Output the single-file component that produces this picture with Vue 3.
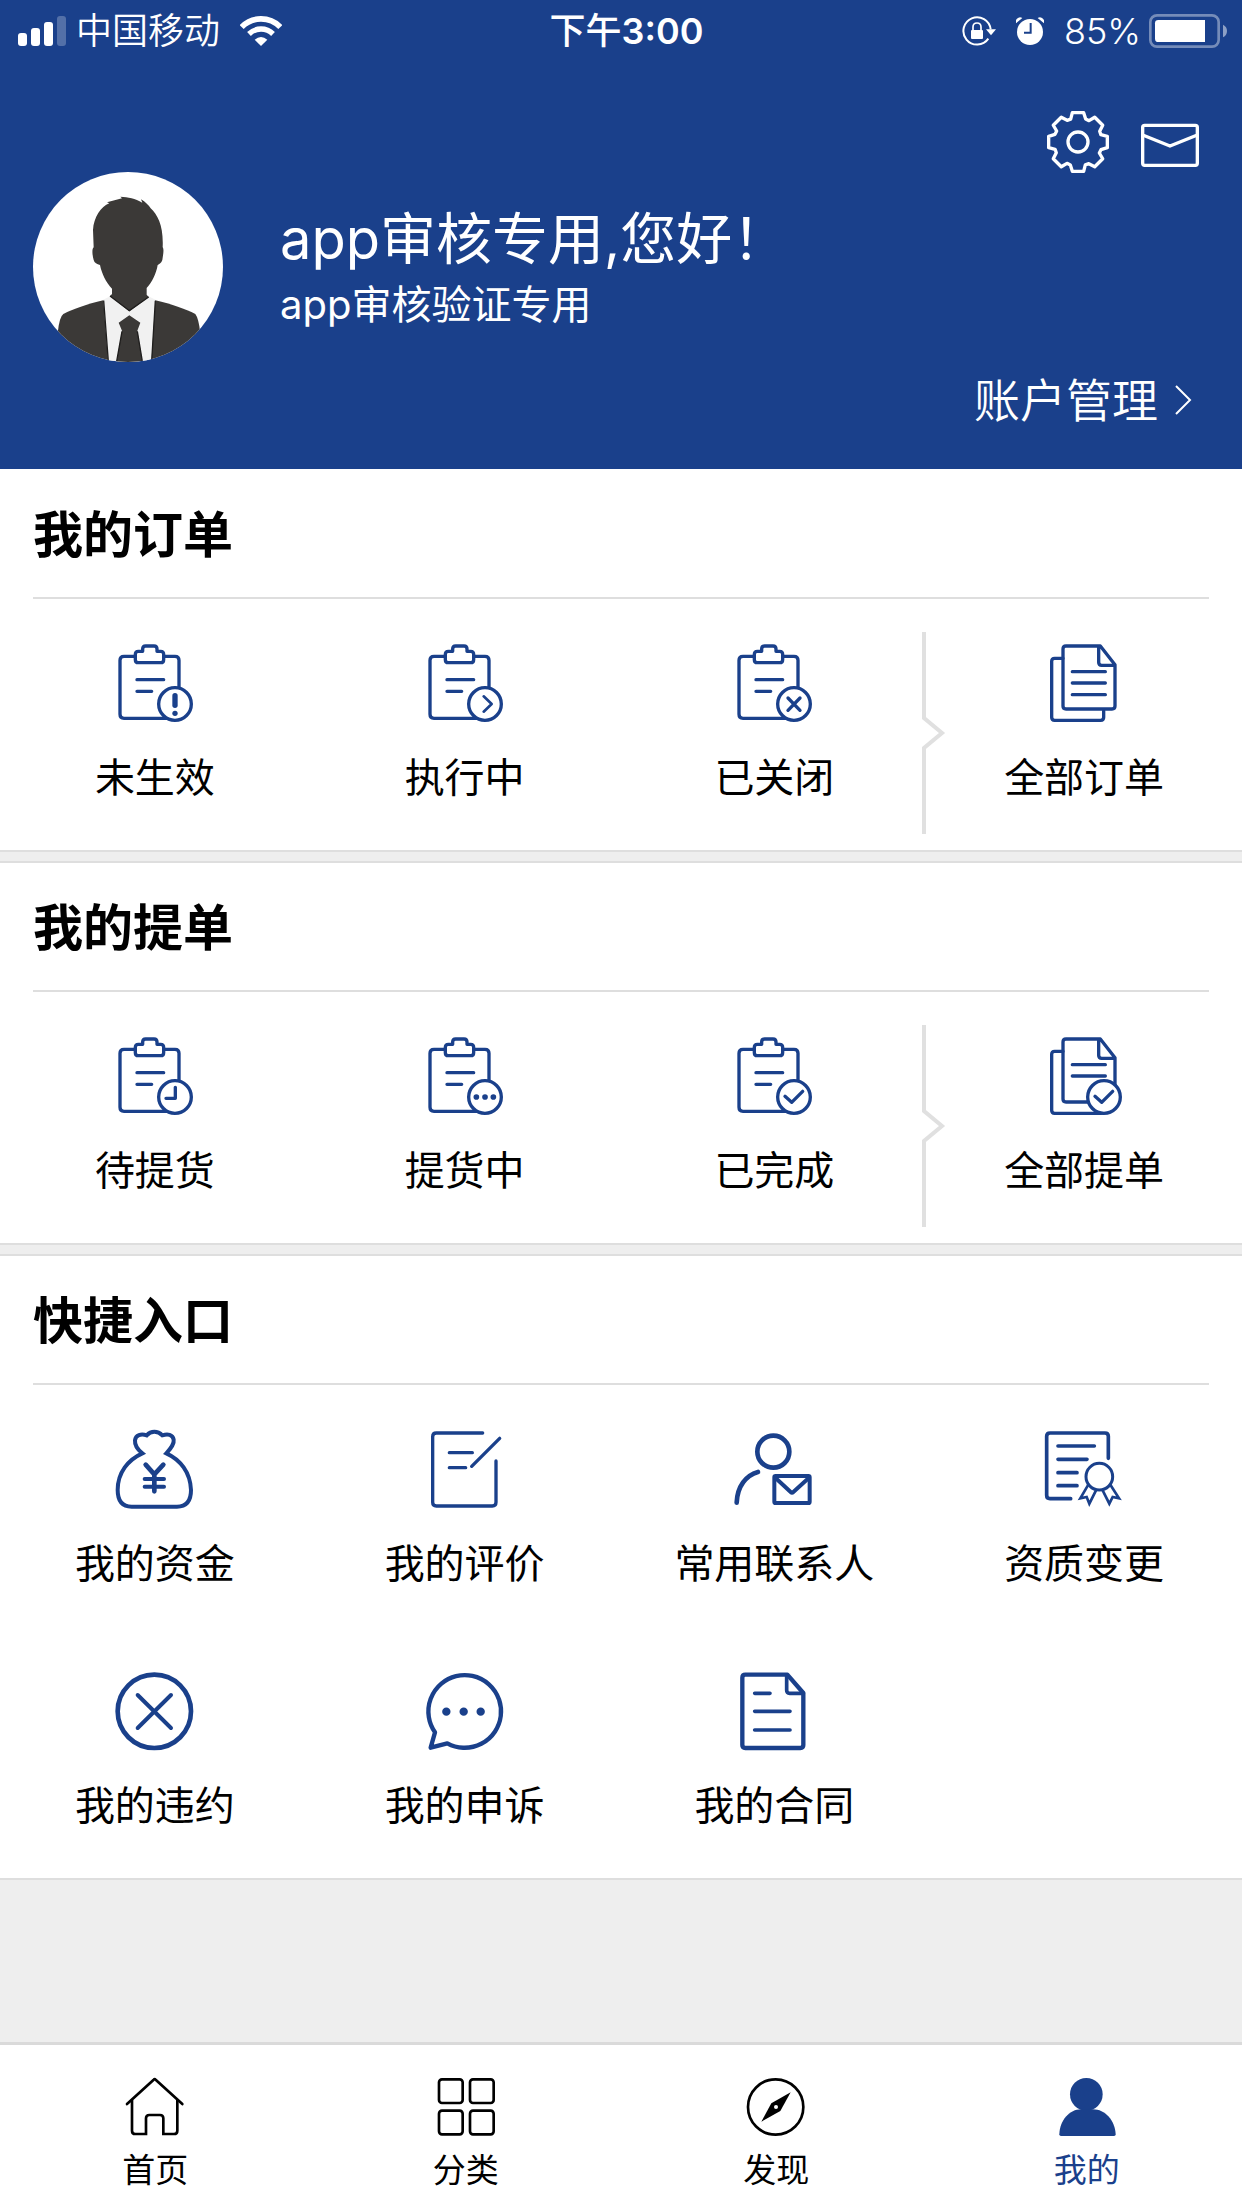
<script setup>
const toothCorners = [[-17, -88], [17, -88], [23, -69], [33, -64]]
const gearPoints = Array.from({ length: 8 }, (_, i) => {
  const a = (i * Math.PI) / 4
  return toothCorners
    .map(([x, y]) => [
      (x * Math.cos(a) - y * Math.sin(a)).toFixed(1),
      (x * Math.sin(a) + y * Math.cos(a)).toFixed(1)
    ].join(','))
    .join(' ')
}).join(' ')

const sections = [
  {
    title: '我的订单',
    split: true,
    items: [
      { label: '未生效', icons: ['clipboard', 'badge-alert'] },
      { label: '执行中', icons: ['clipboard', 'badge-next'] },
      { label: '已关闭', icons: ['clipboard', 'badge-close'] },
      { label: '全部订单', icons: ['pages', 'page-line'] }
    ]
  },
  {
    title: '我的提单',
    split: true,
    items: [
      { label: '待提货', icons: ['clipboard', 'badge-clock'] },
      { label: '提货中', icons: ['clipboard', 'badge-dots'] },
      { label: '已完成', icons: ['clipboard', 'badge-check'] },
      { label: '全部提单', icons: ['pages', 'badge-check'] }
    ]
  },
  {
    title: '快捷入口',
    split: false,
    items: [
      { label: '我的资金', icons: ['money'] },
      { label: '我的评价', icons: ['review'] },
      { label: '常用联系人', icons: ['contact'] },
      { label: '资质变更', icons: ['certificate'] },
      { label: '我的违约', icons: ['breach'] },
      { label: '我的申诉', icons: ['appeal'] },
      { label: '我的合同', icons: ['contract'] }
    ]
  }
]

const tabs = [
  { label: '首页', icon: 'tab-home', active: false },
  { label: '分类', icon: 'tab-grid', active: false },
  { label: '发现', icon: 'tab-compass', active: false },
  { label: '我的', icon: 'tab-me', active: true }
]
</script>

<template>
  <div class="page">
    <svg class="sprite" aria-hidden="true">
      <symbol id="clipboard" viewBox="0 0 240 240">
        <path d="M61 40H27q-12 0-12 12V214q0 12 12 12H160M146 40H180q12 0 12 12V140" />
        <path d="M61 50V34q0-9 9-9H83V18q0-9 9-9H117q9 0 9 9v7h11q9 0 9 9v16q0 9-9 9H70q-9 0-9-9z" />
        <path d="M66 110H146M66 145H110" />
      </symbol>
      <symbol id="badge-alert" viewBox="0 0 240 240">
        <circle cx="180" cy="183" r="49" fill="#fff" />
        <path d="M180 158V187" stroke-width="16" />
        <circle cx="180" cy="211" r="8" fill="currentColor" stroke="none" />
      </symbol>
      <symbol id="badge-next" viewBox="0 0 240 240">
        <circle cx="180" cy="183" r="49" fill="#fff" />
        <path d="M176 160L200 183L176 206" stroke-width="8" />
      </symbol>
      <symbol id="badge-close" viewBox="0 0 240 240">
        <circle cx="180" cy="183" r="49" fill="#fff" />
        <path d="M162 165L198 202M198 165L162 202" />
      </symbol>
      <symbol id="badge-clock" viewBox="0 0 240 240">
        <circle cx="180" cy="183" r="49" fill="#fff" />
        <path d="M181 154V187H153" />
      </symbol>
      <symbol id="badge-dots" viewBox="0 0 240 240">
        <circle cx="180" cy="183" r="49" fill="#fff" />
        <path d="M154 183h.1M180 183h.1M205 183h.1" stroke-width="17" />
      </symbol>
      <symbol id="badge-check" viewBox="0 0 240 240">
        <circle cx="180" cy="183" r="49" fill="#fff" />
        <path d="M153 181L173 199L206 166" />
      </symbol>
      <symbol id="pages" viewBox="0 0 240 240">
        <path d="M57 46H32q-9 0-9 9V223q0 9 9 9H170q9 0 9-9V203" />
        <path d="M169 9H66q-9 0-9 9V189q0 9 9 9H204q9 0 9-9V65L169 9zM164 12V58q0 9 9 9H211" />
        <path d="M85 86H184M85 120H184" />
      </symbol>
      <symbol id="page-line" viewBox="0 0 240 240">
        <path d="M85 155H184" />
      </symbol>
      <symbol id="money" viewBox="0 0 240 240">
        <path d="M82 73C40 92 8 130 8 183C8 218 24 233 50 233H186C212 233 228 218 228 183C226 130 196 92 154 73C170 55 178 44 176 32C173 16 158 14 142 19C128 5 108 5 95 19C78 13 62 18 60 34C59 46 66 60 82 73Z" stroke-linejoin="miter" stroke-width="12" />
        <path d="M92 107L118 136L145 107M118 136V187" stroke-width="14" />
        <path d="M89 150H147M89 173H147" stroke-width="12" />
      </symbol>
      <symbol id="review" viewBox="0 0 240 240">
        <path d="M173 12H34q-11 0-11 11V220q0 11 11 11H202q11 0 11-11V96" />
        <path d="M224 28L140 112M73 71H142M73 116H122" />
      </symbol>
      <symbol id="contact" viewBox="0 0 240 240">
        <circle cx="118" cy="68" r="48" stroke-width="14" />
        <path d="M8 221C10 172 36 139 72 129" stroke-width="14" />
        <rect x="121" y="141" width="106" height="81" rx="4" stroke-width="12" />
        <path d="M124 146L170 189q4 4 8 0L225 146" stroke-width="12" />
      </symbol>
      <symbol id="certificate" viewBox="0 0 240 240">
        <path d="M193 88V22q0-10-10-10H18q-10 0-10 10V199q0 10 10 10H80" stroke-width="11" />
        <path d="M42 51H151M42 91H129M42 131H99M42 170H99" stroke-width="11" />
        <circle cx="166" cy="143" r="40" stroke-width="9" />
        <path d="M133 167L109 208L128 204L136 224L156 184M199 167L225 208L206 204L196 224L176 184" stroke-width="8" stroke-linejoin="miter" />
      </symbol>
      <symbol id="breach" viewBox="0 0 240 240">
        <circle cx="118" cy="121" r="110" stroke-width="14" />
        <path d="M68 72L168 171M168 72L68 171" stroke-width="12" />
      </symbol>
      <symbol id="appeal" viewBox="0 0 240 240">
        <path d="M30 184A109 109 0 1 1 67 217L17 230Z" stroke-width="13" />
        <path d="M64 122h.1M116 122h.1M167 122h.1" stroke-width="25" />
      </symbol>
      <symbol id="contract" viewBox="0 0 240 240">
        <path d="M160 11H34q-9 0-9 9V222q0 9 9 9H199q9 0 9-9V66L160 11z" stroke-width="13" />
        <path d="M158 14V58q0 9 9 9H208M62 67H108M62 121H168M62 177H168" stroke-width="11" />
      </symbol>
      <symbol id="tab-home" viewBox="0 0 180 180">
        <path d="M6 81L86 8q3-3 6 0L172 81" />
        <path d="M21 69V161q0 10 10 10H63V124q0-10 10-10H105q10 0 10 10V171H147q10 0 10-10V69" stroke-linecap="butt" stroke-linejoin="miter" />
      </symbol>
      <symbol id="tab-grid" viewBox="0 0 180 180">
        <rect x="9" y="7" width="71" height="71" rx="9" />
        <rect x="102" y="7" width="71" height="71" rx="9" />
        <rect x="9" y="101" width="71" height="71" rx="9" />
        <rect x="102" y="101" width="71" height="71" rx="9" />
      </symbol>
      <symbol id="tab-compass" viewBox="0 0 180 180">
        <circle cx="89" cy="90" r="83" />
        <path d="M134 46L103 102L46 134L76 79Z" fill="currentColor" stroke="none" />
        <circle cx="90" cy="90" r="6" fill="#fff" stroke="none" />
      </symbol>
      <symbol id="tab-me" viewBox="0 0 180 180">
        <g fill="currentColor" stroke="none">
          <circle cx="88" cy="52" r="49" />
          <path d="M7 172C8 130 38 97 72 97H108C144 97 174 130 176 172q0 5-5 5H12q-5 0-5-5z" />
        </g>
      </symbol>
    </svg>

    <header class="hero">
      <div class="status">
        <div class="status-side">
          <svg class="signal" viewBox="0 0 48 30" fill="#fff">
            <rect y="17" width="9" height="13" rx="3" />
            <rect x="13" y="12" width="9" height="18" rx="3" />
            <rect x="26" y="6" width="9" height="24" rx="3" />
            <rect x="39" width="9" height="30" rx="3" opacity=".25" />
          </svg>
          <span class="carrier">中国移动</span>
          <svg class="wifi" viewBox="0 0 126 90" fill="none" stroke="#fff">
            <path d="M5 33A81 81 0 0 1 121 33" stroke-width="17" />
            <path d="M27 54A51 51 0 0 1 99 54" stroke-width="16" />
            <path d="M63 90L44 71Q63 55 82 71Z" fill="#fff" stroke="none" />
          </svg>
        </div>
        <time class="clock">下午<span class="digits">3:00</span></time>
        <div class="status-side status-right">
          <svg class="lock" viewBox="0 0 102 90" fill="none" stroke="#fff">
            <path d="M79 68A41 41 0 1 1 86 40" stroke-width="6" />
            <path d="M72 40H102L87 58Z" fill="#fff" stroke="none" />
            <rect x="27" y="42" width="36" height="27" rx="3" fill="#fff" stroke="none" />
            <path d="M33 44V33q0-12 12-12t12 12V44" stroke-width="5" />
          </svg>
          <svg class="alarm" viewBox="0 0 84 84">
            <circle cx="42" cy="45" r="39" fill="#fff" />
            <path d="M44 18V47H24" fill="none" stroke="#1a408b" stroke-width="6" />
            <path d="M0 19V9Q8-3 19 3ZM84 19V9Q76-3 65 3Z" fill="#fff" />
          </svg>
          <span class="percent">85%</span>
          <svg class="battery" viewBox="0 0 234 102">
            <rect x="4" y="4" width="205" height="94" rx="20" fill="none" stroke="#fff" stroke-width="8" opacity=".4" />
            <path d="M168 18V84H28q-10 0-10-10V28q0-10 10-10z" fill="#fff" />
            <path d="M222 32q12 6 12 19t-12 19z" fill="#fff" opacity=".5" />
          </svg>
        </div>
      </div>

      <div class="actions">
        <button type="button" class="action" aria-label="设置">
          <svg class="gear" viewBox="-93 -93 186 186">
            <polygon :points="gearPoints" />
            <circle r="30" />
          </svg>
        </button>
        <button type="button" class="action" aria-label="消息">
          <svg class="mail" viewBox="0 0 180 186">
            <rect x="8" y="43" width="164" height="120" rx="6" />
            <path d="M8 72L90 105L172 72" />
          </svg>
        </button>
      </div>

      <div class="profile">
        <svg class="avatar" viewBox="39 36 570 570">
          <defs>
            <clipPath id="avatar-clip"><circle cx="324" cy="321" r="285" /></clipPath>
          </defs>
          <g clip-path="url(#avatar-clip)">
            <rect x="39" y="36" width="570" height="570" fill="#fff" />
            <path d="M248 420L272 408H384L408 420L396 610H262Z" fill="#f1f1f1" />
            <g fill="#3b3937">
              <path d="M219 210C221 172 243 140 268 130L261 127L306 115L301 110C325 112 345 114 367 128L363 118C376 126 387 136 392 145C414 165 431 200 428 262C433 268 429 285 427 300C424 309 418 312 413 315C409 340 396 368 380 384V404L386 411L328 454L270 408L276 402V386C258 368 245 340 240 315C231 312 223 309 221 300C217 285 215 268 221 262Z" />
              <path d="M250 421C200 433 160 447 130 462Q118 470 113 520V610H265Z" />
              <path d="M406 421C456 433 496 447 526 462Q536 475 541 520V610H394Z" />
              <path d="M328 466L361 488L352 512L368 610H289L306 512L296 488Z" />
            </g>
            <path d="M270 408L328 452L386 411M251 422L265 604M406 422L395 604M306 514L290 604M352 514L367 604" fill="none" stroke="#1f1e1d" stroke-width="4" />
          </g>
        </svg>
        <div class="names">
          <h1 class="name">app审核专用,您好&#xFF01;</h1>
          <p class="company">app审核验证专用</p>
        </div>
      </div>

      <a class="account" href="#">
        账户管理
        <svg class="chevron" viewBox="0 0 18 32"><path d="M2 2L16 16L2 30" /></svg>
      </a>
    </header>

    <main class="content">
      <section v-for="section in sections" :key="section.title" class="card">
        <h2 class="card-title">{{ section.title }}</h2>
        <div class="grid">
          <a v-for="item in section.items" :key="item.label" class="item" href="#">
            <svg class="item-icon" viewBox="0 0 240 240">
              <use v-for="icon in item.icons" :key="icon" :href="'#' + icon" />
            </svg>
            <span class="item-label">{{ item.label }}</span>
          </a>
          <svg v-if="section.split" class="split" viewBox="0 0 24 202">
            <path d="M2 0V86L20 101L2 116V202" />
          </svg>
        </div>
      </section>
    </main>

    <nav class="tabs">
      <a v-for="tab in tabs" :key="tab.label" class="tab" :class="{ active: tab.active }" href="#">
        <svg class="tab-icon" viewBox="0 0 180 180"><use :href="'#' + tab.icon" /></svg>
        <span class="tab-label">{{ tab.label }}</span>
      </a>
    </nav>
  </div>
</template>

<style>
body {
  margin: 0;
  background: #eee;
}
</style>

<style scoped>
.page {
  display: flex;
  flex-direction: column;
  min-height: 100vh;
  color: #000;
  font-family: Inter, "Noto Sans CJK SC", sans-serif;
  font-weight: 400;
}

.page svg {
  display: block;
  flex: none;
}

.page a {
  color: inherit;
  text-decoration: none;
}

.page .sprite {
  position: absolute;
  width: 0;
  height: 0;
}

.hero {
  display: flex;
  flex-direction: column;
  padding-bottom: 37px;
  background: #1a408b;
  color: #fff;
}

.status {
  display: flex;
  align-items: center;
  height: 62px;
  padding: 0 15px 0 18px;
  font-size: 36px;
  line-height: 62px;
}

.status-side {
  display: flex;
  flex: 1;
  align-items: center;
}

.status-right {
  justify-content: flex-end;
}

.signal {
  width: 48px;
  height: 30px;
}

.carrier {
  margin: 0 20px 0 10px;
  font-weight: 350;
}

.wifi {
  width: 42px;
  height: 30px;
}

.clock {
  margin-left: 8px;
  font-weight: 500;
}

.digits {
  font-weight: 600;
}

.lock {
  width: 34px;
  height: 30px;
}

.alarm {
  width: 28px;
  height: 28px;
  margin: 0 20px;
}

.percent {
  font-weight: 350;
}

.battery {
  width: 78px;
  height: 34px;
  margin-left: 8px;
}

.actions {
  display: flex;
  justify-content: flex-end;
  gap: 31px;
  height: 61px;
  margin-top: 49px;
  padding-right: 42px;
}

.action {
  padding: 0;
  border: 0;
  background: none;
}

.gear,
.mail {
  height: 62px;
  fill: none;
  stroke: #fff;
  stroke-width: 10;
  stroke-linejoin: round;
}

.gear {
  width: 62px;
}

.mail {
  width: 60px;
}

.profile {
  display: flex;
  align-items: center;
  gap: 57px;
  padding: 0 33px;
}

.avatar {
  width: 190px;
  height: 190px;
}

.name,
.company {
  margin: 0;
  font-weight: 400;
}

.name {
  font-size: 56px;
  line-height: 76px;
}

.company {
  font-size: 40px;
  line-height: 56px;
}

.account {
  display: flex;
  align-items: center;
  align-self: flex-end;
  gap: 16px;
  margin: 6px 50px 0 0;
  font-size: 46px;
  font-weight: 350;
  line-height: 64px;
}

.chevron {
  width: 18px;
  height: 32px;
  fill: none;
  stroke: #fff;
  stroke-width: 2;
}

.content {
  display: flex;
  flex: 1;
  flex-direction: column;
  gap: 9px;
}

.card {
  border: solid #dedede;
  border-width: 2px 0;
  background: #fff;
}

.card:first-child {
  border-top: 0;
}

.card-title {
  margin: 0 33px;
  padding-top: 3px;
  border-bottom: 2px solid #dedede;
  font-size: 50px;
  font-weight: 700;
  line-height: 124px;
}

.grid {
  position: relative;
  display: grid;
  grid-template-columns: repeat(4, 1fr);
  row-gap: 79px;
  padding: 44px 3px 44px 0;
}

.card:first-child .card-title {
  padding-top: 4px;
}

.item {
  display: flex;
  flex-direction: column;
  align-items: center;
  gap: 27px;
}

.item-icon {
  width: 80px;
  height: 80px;
  color: #1a408b;
  fill: none;
  stroke: currentColor;
  stroke-width: 10;
  stroke-linecap: round;
  stroke-linejoin: round;
}

.item-label {
  font-size: 40px;
  line-height: 56px;
  white-space: nowrap;
}

/* Pointer line between the three states and the "all" entry */
.split {
  position: absolute;
  top: 33px;
  right: 25%;
  width: 24px;
  height: 202px;
  margin-right: -14px;
  fill: none;
  stroke: #e0e0e0;
  stroke-width: 4;
}

.tabs {
  position: sticky;
  bottom: 0;
  display: grid;
  grid-template-columns: repeat(4, 1fr);
  padding: 32px 0 14px;
  border-top: 3px solid #dadada;
  background: #fff;
}

.tab {
  display: flex;
  flex-direction: column;
  align-items: center;
  gap: 9px;
}

.tab-icon {
  width: 60px;
  height: 60px;
  fill: none;
  stroke: currentColor;
  stroke-width: 8;
  stroke-linecap: round;
}

.tab-label {
  font-size: 33px;
  line-height: 48px;
}

.page .active {
  color: #1a408b;
}
</style>
